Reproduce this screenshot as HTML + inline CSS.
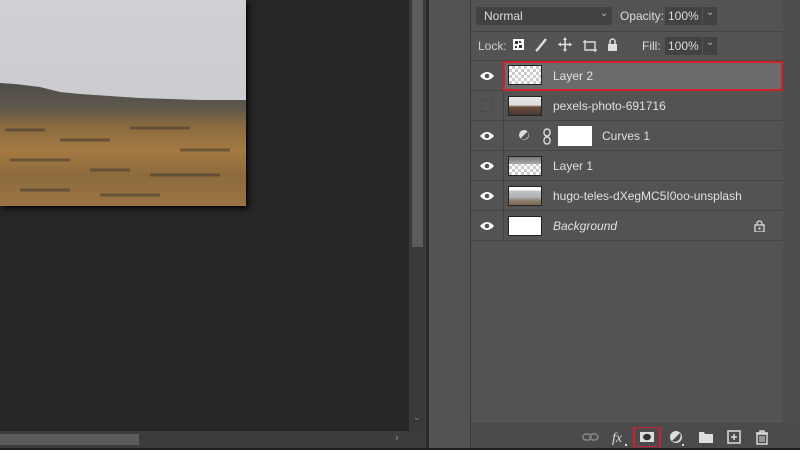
<!DOCTYPE html>
<html><head><meta charset="utf-8"><style>
*{margin:0;padding:0;box-sizing:border-box}
body{width:800px;height:450px;background:#262626;position:relative;overflow:hidden;font-family:"Liberation Sans",sans-serif;font-size:12px;color:#dcdcdc}
.a{position:absolute}
.row{position:absolute;left:471px;width:312px;height:30px;border-bottom:1px solid #444}
.eye{position:absolute;left:8px;top:9px}
.sep{position:absolute;left:32px;top:0;width:1px;height:30px;background:#444}
.th{position:absolute;left:37px;top:5px;width:34px;height:20px;border:1px solid #222;background:#fff}
.chk{background-color:#fff;background-image:linear-gradient(45deg,#ccc 25%,transparent 25%,transparent 75%,#ccc 75%),linear-gradient(45deg,#ccc 25%,transparent 25%,transparent 75%,#ccc 75%);background-size:6px 6px;background-position:0 0,3px 3px}
.nm{position:absolute;left:82px;top:8px;font-size:12px;color:#e0e0e0;white-space:nowrap}
</style></head><body>
<!-- image -->
<svg class="a" style="left:0;top:0;box-shadow:2px 2px 6px #000" width="246" height="206" viewBox="0 0 246 206">
<defs><linearGradient id="sky" x1="0" y1="0" x2="0" y2="1"><stop offset="0" stop-color="#cfd0d4"/><stop offset="1" stop-color="#c8c8cc"/></linearGradient>
<linearGradient id="g" x1="0" y1="0" x2="0" y2="1"><stop offset="0" stop-color="#4e4d4a"/><stop offset="0.2" stop-color="#5e574c"/><stop offset="0.35" stop-color="#8a6a40"/><stop offset="0.55" stop-color="#a57a42"/><stop offset="0.75" stop-color="#8d6b3e"/><stop offset="1" stop-color="#9a7442"/></linearGradient></defs>
<rect width="246" height="206" fill="url(#sky)"/>
<path d="M0 83L15 84L40 87L60 92L80 94L110 96L140 98L170 99L200 100L246 100V206H0z" fill="url(#g)"/>
<g stroke="#3e3a30" stroke-width="3" opacity="0.55"><path d="M5 130h40M60 140h50M130 128h60M180 150h50M10 160h60M90 170h40M150 175h70M20 190h50M100 195h60"/></g>
</svg>
<!-- vertical scrollbar -->
<div class="a" style="left:409px;top:0;width:17px;height:431px;background:#3a3a3a"></div>
<div class="a" style="left:412px;top:0;width:11px;height:247px;background:#5c5c5c"></div>
<div class="a" style="left:413px;top:412px;color:#888;font-size:9px">⌄</div>
<!-- horizontal -->
<div class="a" style="left:0;top:431px;width:426px;height:17px;background:#3c3c3c"></div>
<div class="a" style="left:0;top:434px;width:139px;height:11px;background:#5c5c5c"></div>
<div class="a" style="left:395px;top:432px;color:#888;font-size:11px">›</div>
<div class="a" style="left:426px;top:0;width:3px;height:450px;background:#2a2a2a"></div>
<div class="a" style="left:429px;top:0;width:41px;height:448px;background:#535353"></div>
<div class="a" style="left:470px;top:0;width:1px;height:448px;background:#3a3a3a"></div>
<div class="a" style="left:471px;top:0;width:329px;height:448px;background:#535353"></div>
<div class="a" style="left:783px;top:0;width:17px;height:423px;background:#4d4d4d"></div>
<div class="a" style="left:0;top:448px;width:800px;height:2px;background:#1e1e1e"></div>
<!-- header -->
<div class="a" style="left:476px;top:7px;width:136px;height:18px;background:#424242;border-radius:2px"><span class="a" style="left:8px;top:2px">Normal</span><span class="a" style="left:124px;top:1px;font-size:10px;color:#bbb">⌄</span></div>
<div class="a" style="left:620px;top:9px">Opacity:</div>
<div class="a" style="left:665px;top:7px;width:37px;height:18px;background:#424242"><span class="a" style="left:3px;top:2px">100%</span></div>
<div class="a" style="left:703px;top:7px;width:14px;height:18px;background:#424242;color:#bbb;font-size:10px;text-align:center">⌄</div>
<div class="a" style="left:471px;top:31px;width:312px;height:1px;background:#444"></div>
<div class="a" style="left:478px;top:39px;color:#cfcfcf">Lock:</div>
<svg class="a" style="left:512px;top:37px" width="105" height="16" viewBox="0 0 105 16">
<rect x="1" y="2" width="11" height="11" fill="#fff"/><rect x="3" y="4" width="3" height="3" fill="#333"/><rect x="7" y="8" width="3" height="3" fill="#333"/><rect x="7" y="4" width="2" height="2" fill="#333"/><rect x="3" y="9" width="2" height="2" fill="#333"/>
<path d="M24 14 L27 11 M26 12 L34 2" stroke="#ddd" stroke-width="2.4" fill="none"/>
<path d="M53 1v13M46.5 7.5h13" stroke="#ddd" stroke-width="1.6"/><path d="M53 0l-2 3h4zM53 15l-2-3h4zM46 7.5l3-2v4zM60 7.5l-3-2v4z" fill="#ddd"/>
<path d="M73 3v10h12M71 5h12v10" stroke="#ddd" stroke-width="1.4" fill="none"/>
<rect x="96" y="7" width="9" height="7" fill="#ddd"/><path d="M98 7V4.5a2.5 2.5 0 0 1 5 0V7" stroke="#ddd" stroke-width="1.5" fill="none"/>
</svg>
<div class="a" style="left:642px;top:39px">Fill:</div>
<div class="a" style="left:665px;top:37px;width:37px;height:18px;background:#424242"><span class="a" style="left:3px;top:2px">100%</span></div>
<div class="a" style="left:703px;top:37px;width:14px;height:18px;background:#424242;color:#bbb;font-size:10px;text-align:center">⌄</div>
<div class="a" style="left:471px;top:60px;width:312px;height:1px;background:#444"></div>
<!-- rows -->
<div class="row" style="top:61px;background:#535353"><div class="a" style="left:32px;top:0;width:280px;height:30px;background:#6b6b6b;border:2px solid #d21f2b"></div><svg class="eye" width="16" height="12"><path d="M1 6Q8-2 15 6Q8 14 1 6z" fill="#fff"/><circle cx="8" cy="6" r="2.3" fill="#535353"/></svg><div class="th chk" style="left:37px;top:4px"></div><div class="nm">Layer 2</div></div>
<div class="row" style="top:91px"><div class="sep"></div><div class="a" style="left:10px;top:9px;width:12px;height:12px;border:1px solid #4a4a4a"></div><div class="th" style="background:linear-gradient(180deg,#e8e8ea 0,#dcdde0 45%,#6d4a3a 55%,#4a3a33 100%)"></div><div class="nm">pexels-photo-691716</div></div>
<div class="row" style="top:121px"><svg class="eye" width="16" height="12"><path d="M1 6Q8-2 15 6Q8 14 1 6z" fill="#fff"/><circle cx="8" cy="6" r="2.3" fill="#535353"/></svg><div class="sep"></div><svg class="a" style="left:47px;top:8px" width="14" height="14"><circle cx="6" cy="6" r="5" fill="#ddd"/><path d="M2.5 9.5L9.5 2.5A5 5 0 0 1 2.5 9.5z" fill="#535353"/></svg><svg class="a" style="left:71px;top:7px" width="10" height="17"><rect x="2" y="1" width="6" height="7" rx="3" stroke="#ddd" fill="none" stroke-width="1.4"/><rect x="2" y="9" width="6" height="7" rx="3" stroke="#ddd" fill="none" stroke-width="1.4"/></svg><div class="a" style="left:87px;top:5px;width:34px;height:20px;background:#fff"></div><div class="nm" style="left:131px">Curves 1</div></div>
<div class="row" style="top:151px"><svg class="eye" width="16" height="12"><path d="M1 6Q8-2 15 6Q8 14 1 6z" fill="#fff"/><circle cx="8" cy="6" r="2.3" fill="#535353"/></svg><div class="sep"></div><div class="th chk"><div style="height:7px;background:linear-gradient(180deg,#777,#aaa)"></div></div><div class="nm">Layer 1</div></div>
<div class="row" style="top:181px"><svg class="eye" width="16" height="12"><path d="M1 6Q8-2 15 6Q8 14 1 6z" fill="#fff"/><circle cx="8" cy="6" r="2.3" fill="#535353"/></svg><div class="sep"></div><div class="th" style="background:linear-gradient(180deg,#fff 0,#fff 3px,#c0c4c8 4px,#b0b4b8 10px,#8a7a68 14px,#7a6450 20px)"></div><div class="nm">hugo-teles-dXegMC5I0oo-unsplash</div></div>
<div class="row" style="top:211px"><svg class="eye" width="16" height="12"><path d="M1 6Q8-2 15 6Q8 14 1 6z" fill="#fff"/><circle cx="8" cy="6" r="2.3" fill="#535353"/></svg><div class="sep"></div><div class="th"></div><div class="nm" style="font-style:italic">Background</div><svg class="a" style="left:283px;top:9px" width="11" height="12"><rect x="1" y="5" width="9" height="7" fill="none" stroke="#ddd" stroke-width="1.3"/><rect x="4.5" y="7.5" width="2" height="2" fill="#ddd"/><path d="M3 5V3.5a2.5 2.5 0 0 1 5 0V5" stroke="#ddd" stroke-width="1.3" fill="none"/></svg></div>
<!-- bottom bar -->
<div class="a" style="left:471px;top:423px;width:329px;height:25px;background:#4b4b4b"></div>
<svg class="a" style="left:580px;top:427px" width="200" height="20" viewBox="0 0 200 20">
<rect x="3" y="7" width="8" height="6" rx="3" stroke="#888" fill="none" stroke-width="1.5"/><rect x="10" y="7" width="8" height="6" rx="3" stroke="#888" fill="none" stroke-width="1.5"/>
<text x="32" y="15" font-family="Liberation Serif,serif" font-style="italic" font-size="14" fill="#ddd">fx</text><rect x="45" y="17" width="2" height="2" fill="#ddd"/>
<rect x="54" y="0" width="26" height="20" fill="none" stroke="#d21f2b" stroke-width="2"/><rect x="60" y="5" width="14" height="10" fill="#ddd"/><ellipse cx="67" cy="10" rx="4" ry="3.2" fill="#333"/>
<circle cx="96" cy="10" r="6" fill="#ddd"/><path d="M92 14L100 6A6 6 0 0 1 92 14z" fill="#4b4b4b"/><rect x="102" y="17" width="2" height="2" fill="#ddd"/>
<path d="M119 5h5l1 2h8v9h-14z" fill="#ddd"/>
<rect x="148" y="4" width="12" height="12" fill="none" stroke="#ddd" stroke-width="1.5"/><path d="M154 7v6M151 10h6" stroke="#ddd" stroke-width="1.5"/>
<path d="M176 6h12M180 6V4h4v2M177 7h10v10h-10z" stroke="#ddd" stroke-width="1.4" fill="none"/><path d="M180 9v6M182 9v6M184 9v6" stroke="#ddd" stroke-width="1"/>
</svg>
</body></html>
